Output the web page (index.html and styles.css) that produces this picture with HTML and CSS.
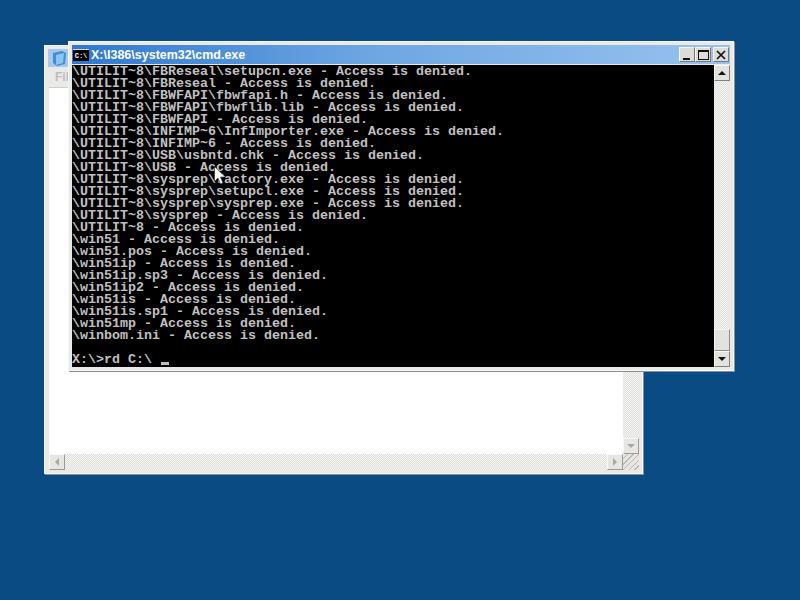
FILE: index.html
```html
<!DOCTYPE html>
<html lang="en">
<head>
<meta charset="utf-8">
<title>cmd.exe</title>
<link rel="stylesheet" href="styles.css">
</head>
<body>
<div class="desktop">
  <section class="win back">
    <div class="title back-title">
      <svg class="app-icon" width="16" height="18" viewBox="0 0 16 18"><path d="M1 4l9-2 4 2-1 11-8 2-4-3z" fill="#3f8fd6"/><path d="M4 6l8-2-1 10-7 2z" fill="#8cc6ee"/></svg>
    </div>
    <div class="menu">File</div>
    <div class="back-body">
      <div class="back-content">
        <div class="back-white"></div>
        <div class="vbar back-vbar">
          <span class="sbtn faded"><i class="arr up"></i></span>
          <span class="track"></span>
          <span class="sbtn faded"><i class="arr down"></i></span>
        </div>
      </div>
      <div class="hbar">
        <span class="sbtn faded"><i class="arr left"></i></span>
        <span class="track"></span>
        <span class="sbtn faded"><i class="arr right"></i></span>
        <span class="grip"></span>
      </div>
    </div>
  </section>

  <section class="win front">
    <div class="title front-title">
      <span class="cmd-icon">C:\</span>
      <span class="title-text">X:\I386\system32\cmd.exe</span>
      <span class="controls">
        <span class="cbtn"><i class="min"></i></span>
        <span class="cbtn"><i class="max"></i></span>
        <span class="cbtn close"><svg width="10" height="10" viewBox="0 0 10 10"><path d="M1 1l8 8M9 1l-8 8" stroke="#111" stroke-width="1.700"/></svg></span>
      </span>
    </div>
    <div class="console-row">
      <pre class="console">\UTILIT~8\FBReseal\setupcn.exe - Access is denied.
\UTILIT~8\FBReseal - Access is denied.
\UTILIT~8\FBWFAPI\fbwfapi.h - Access is denied.
\UTILIT~8\FBWFAPI\fbwflib.lib - Access is denied.
\UTILIT~8\FBWFAPI - Access is denied.
\UTILIT~8\INFIMP~6\InfImporter.exe - Access is denied.
\UTILIT~8\INFIMP~6 - Access is denied.
\UTILIT~8\USB\usbntd.chk - Access is denied.
\UTILIT~8\USB - Access is denied.
\UTILIT~8\sysprep\factory.exe - Access is denied.
\UTILIT~8\sysprep\setupcl.exe - Access is denied.
\UTILIT~8\sysprep\sysprep.exe - Access is denied.
\UTILIT~8\sysprep - Access is denied.
\UTILIT~8 - Access is denied.
\win51 - Access is denied.
\win51.pos - Access is denied.
\win51ip - Access is denied.
\win51ip.sp3 - Access is denied.
\win51ip2 - Access is denied.
\win51is - Access is denied.
\win51is.sp1 - Access is denied.
\win51mp - Access is denied.
\winbom.ini - Access is denied.

X:\&gt;rd C:\ <span class="caret">&nbsp;</span></pre>
      <div class="vbar front-vbar">
        <span class="sbtn"><i class="arr up dark"></i></span>
        <span class="track"></span>
        <span class="thumb"></span>
        <span class="sbtn"><i class="arr down dark"></i></span>
      </div>
    </div>
  </section>

  <svg class="pointer" width="12" height="19" viewBox="0 0 12 19"><path d="M.5.5v15l3.500-3.500 2.500 6 2.500-1-2.500-6h5z" fill="#fff" stroke="#222" stroke-width=".6"/></svg>
</div>
</body>
</html>
```
FILE: styles.css
```css
* { box-sizing: border-box; }
html, body { margin: 0; padding: 0; }
.desktop { position: relative; width: 800px; height: 600px; overflow: hidden; background: #0b4b83; }
.win { position: absolute; display: flex; flex-direction: column; background: #e9e9e7; border: 1px solid #f6f6f4; box-shadow: 1px 1px 0 #8b8f93; }
.back { left: 44px; top: 45px; width: 599px; height: 429px; padding: 3px; }
.front { left: 68px; top: 41px; width: 666px; height: 330px; padding: 3px; }
.title { display: flex; align-items: center; height: 18px; flex: none; }
.back-title { background: #a5c8ec; padding-left: 4px; }
.front-title { height: 19px; padding-left: 1px; background: linear-gradient(90deg, #2f78cf 0%, #6ea6e2 45%, #98c2ee 100%); }
.app-icon { flex: none; }
.menu { height: 20px; flex: none; padding: 3px 0 0 7px; font: bold 12px/14px "Liberation Sans", sans-serif; color: #bdbdbd; }
.back-body { flex: 1; display: flex; flex-direction: column; background: #fff; margin-left: 1px; border-top: 1px solid #cfcfcd; }
.back-content { flex: 1; display: flex; min-height: 0; }
.back-white { flex: 1; background: #fff; }
.cmd-icon { width: 16px; height: 12px; flex: none; background: #000; color: #fff; font: bold 7px/12px "Liberation Mono", monospace; text-align: center; border-top: 1px solid #d8d8d8; }
.title-text { flex: 1; margin-left: 2px; color: #fff; font: bold 12.5px/18px "Liberation Sans", sans-serif; white-space: nowrap; }
.controls { display: flex; flex: none; margin-right: 1px; }
.cbtn { display: flex; align-items: center; justify-content: center; width: 16px; height: 15px; background: #dcdcd8; border: 1px solid; border-color: #f8f8f6 #77787a #77787a #f8f8f6; }
.close { margin-left: 2px; }
.min { width: 7px; height: 2px; background: #111; margin-top: 8px; margin-right: 2px; }
.max { width: 11px; height: 10px; border: 1px solid #111; border-top-width: 2px; }
.console-row { flex: 1; display: flex; min-height: 0; margin-top: 1px; }
.console { flex: 1; margin: 0; padding: 1px 0 0; background: #000; color: #c0c0c0; font: bold 13.333px/12px "Liberation Mono", monospace; overflow: hidden; white-space: pre; }
.caret { display: inline-block; width: 8px; height: 3px; background: #c0c0c0; vertical-align: -2px; line-height: 3px; margin-left: 1px; overflow: hidden; }
.vbar { display: flex; flex-direction: column; width: 16px; flex: none; }
.sbtn { display: flex; align-items: center; justify-content: center; flex: none; width: 16px; height: 16px; background: #e2e2de; border: 1px solid; border-color: #f8f8f6 #7f8082 #7f8082 #f8f8f6; }
.track { flex: 1; background: repeating-conic-gradient(#f6f6f4 0 25%, #dededa 0 50%) 0 0 / 2px 2px; }
.thumb { height: 22px; flex: none; background: #e2e2de; border: 1px solid; border-color: #f4f4f2 #8d8e90 #8d8e90 #f4f4f2; }
.arr { width: 0; height: 0; display: block; border: 4px solid transparent; }
.arr.up { border-top: 0; border-bottom-color: #a8a8a8; }
.arr.down { border-bottom: 0; border-top-color: #a8a8a8; }
.arr.left { border-left: 0; border-right-color: #a8a8a8; }
.arr.right { border-right: 0; border-left-color: #a8a8a8; }
.arr.up.dark { border-bottom-color: #111; }
.arr.down.dark { border-top-color: #111; }
.faded { background: #e6e6e3; border-color: #f8f8f6 #9a9a9a #9a9a9a #f8f8f6; }
.hbar { display: flex; height: 16px; flex: none; }
.grip { width: 16px; flex: none; background: repeating-linear-gradient(135deg, #e6e6e3 0 3px, #c0b4b4 3px 4px); }
.pointer { position: absolute; left: 214px; top: 166px; }
```
